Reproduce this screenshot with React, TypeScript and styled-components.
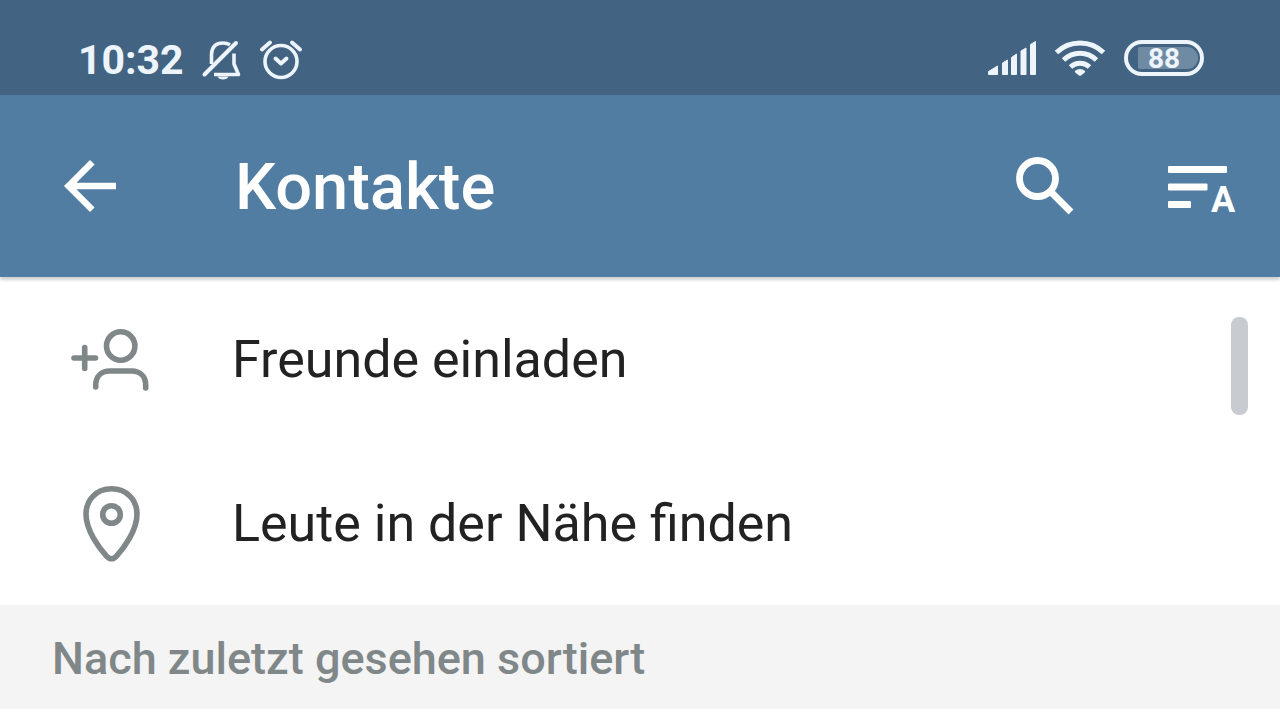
import React from 'react';
import styled, { createGlobalStyle } from 'styled-components';

const GlobalStyle = createGlobalStyle`
  * { box-sizing: border-box; }
  body {
    margin: 0;
    background: #ffffff;
    font-family: Roboto, "Liberation Sans", sans-serif;
  }
  svg { display: block; flex: none; overflow: visible; }
`;

const StatusBar = styled.div`
  display: flex;
  align-items: flex-start;
  justify-content: space-between;
  padding: 0 76px 0 78px;
  height: 95px;
  background: #426482;
  color: #edf4fb;
`;

const StatusGroup = styled.div<{ $gap: number }>`
  display: flex;
  align-items: center;
  gap: ${(p) => p.$gap}px;
  height: 48px;
  margin-top: 36px;
`;

const SystemGroup = styled(StatusGroup)`
  margin-top: 34px;
`;

const Clock = styled.time`
  font-size: 41px;
  line-height: 48px;
  font-weight: 700;
`;

const Battery = styled.div`
  display: flex;
  align-items: center;
  justify-content: flex-end;
  width: 80px;
  height: 36px;
  padding-right: 2px;
  border: 4px solid #edf4fb;
  border-radius: 18px;
`;

const BatteryLevel = styled.span`
  width: 60px;
  height: 22px;
  padding-left: 10px;
  border-radius: 2px 11px 11px 2px;
  background: #6f8ba4;
  font-size: 28px;
  line-height: 24px;
  font-weight: 700;
`;

const AppBar = styled.header`
  position: relative;
  z-index: 1;
  display: flex;
  align-items: center;
  height: 182px;
  padding: 0 44px 0 51px;
  background: #517da2;
  color: #ffffff;
  box-shadow: 0 3px 3px rgba(0, 0, 0, 0.18);
`;

const IconButton = styled.button`
  display: block;
  padding: 0;
  border: 0;
  background: none;
  color: inherit;
  cursor: pointer;
`;

const Title = styled.h1`
  flex: 1;
  margin: 0 0 0 106px;
  padding-top: 2px;
  font-size: 65px;
  line-height: 78px;
  font-weight: 500;
`;

const Actions = styled.div`
  display: flex;
  align-items: center;
  gap: 94px;
`;

const Content = styled.main`
  position: relative;
`;

const ActionList = styled.ul`
  margin: 0;
  padding: 0;
  list-style: none;
`;

const ActionRow = styled.button`
  display: flex;
  align-items: center;
  gap: 81px;
  width: 100%;
  height: 164px;
  padding: 2px 71px 0;
  border: 0;
  background: #ffffff;
  color: #222222;
  font-family: inherit;
  font-size: 52px;
  line-height: 60px;
  text-align: left;
  cursor: pointer;

  svg { color: #808789; }
`;

const ScrollThumb = styled.div`
  position: absolute;
  top: 40px;
  right: 32px;
  width: 17px;
  height: 98px;
  border-radius: 8px;
  background: #c8cbd0;
`;

const SectionHeader = styled.h2`
  margin: 0;
  padding: 27px 52px 23px;
  background: #f4f4f4;
  color: #808789;
  font-size: 45px;
  line-height: 54px;
  font-weight: 500;
`;

const MutedIcon = () => (
  <svg width="38" height="40" viewBox="0 0 38 40" fill="none" stroke="currentColor" strokeWidth="3.600" aria-hidden="true">
    <path d="M1.500 34.500 33 3" strokeWidth="4" strokeLinecap="round" />
    <path d="M8.500 24V14C9 6 14 3 20 3c3 0 5 .6 7 1.800" />
    <path d="M31 13.500V24l4.500 10.500H11" strokeLinejoin="round" />
    <path d="M14.500 36.500h11c-1 2.200-3 3-5.500 3s-4.500-.8-5.500-3Z" fill="currentColor" stroke="none" />
  </svg>
);

const AlarmIcon = () => (
  <svg width="42" height="40" viewBox="0 0 42 40" fill="none" stroke="currentColor" strokeWidth="4" strokeLinecap="round" aria-hidden="true">
    <circle cx="21" cy="21.500" r="16" strokeWidth="3.600" />
    <path d="M2 9.500 10 2.500M32 2.500l8 7" />
    <path d="m15.500 18.500 5.500 5 5.500-5" strokeLinejoin="round" />
  </svg>
);

const SignalIcon = () => (
  <svg width="48" height="34" viewBox="0 0 48 34" fill="currentColor" stroke="currentColor" strokeLinejoin="round" aria-hidden="true">
    <path d="M.5 30.500 9.500 25v8.500h-9ZM14.500 22l5-3v14.500h-5ZM23.500 16.500l5-3.500v20.500h-5ZM33 10l5-3v26.500h-5ZM42.500 3.500l5-3v33h-5Z" />
  </svg>
);

const WifiIcon = () => (
  <svg width="50" height="36" viewBox="0 0 50 36" fill="none" stroke="currentColor" strokeWidth="5" aria-hidden="true">
    <path d="M1.500 12.500C14.500-.2 35.500-.2 48.500 12.500" />
    <path d="M8.500 20c9.500-9 23.500-9 33 0" />
    <path d="M15.500 27c5.500-5 13.500-5 19 0" />
    <path d="M20 31c3-2.800 7-2.800 10 0 .4.600.2 1-.2 1.400L26 35.600c-.6.500-1.400.5-2 0l-3.800-3.200c-.4-.4-.6-.8-.2-1.400Z" fill="currentColor" stroke="none" />
  </svg>
);

const BackIcon = () => (
  <svg width="78" height="78" viewBox="0 0 24 24" fill="currentColor" aria-hidden="true">
    <path d="M20 11H7.830l5.590-5.590L12 4l-8 8 8 8 1.410-1.410L7.830 13H20v-2z" />
  </svg>
);

const SearchIcon = () => (
  <svg width="58" height="58" viewBox="0 0 58 58" fill="none" stroke="currentColor" strokeWidth="6.800" aria-hidden="true">
    <circle cx="21.500" cy="21.500" r="18" />
    <path d="m35 35 20 20" />
  </svg>
);

const SortIcon = () => (
  <svg width="68" height="58" viewBox="0 0 68 58" fill="currentColor" aria-hidden="true">
    <rect y="9" width="59" height="7" rx="1" />
    <rect y="26.500" width="39.500" height="7" rx="1" />
    <rect y="44" width="23" height="7" rx="1" />
    <text x="55" y="54.500" textAnchor="middle" fontFamily="Roboto, sans-serif" fontSize="36" fontWeight="700">A</text>
  </svg>
);

const InviteIcon = () => (
  <svg width="80" height="62" viewBox="0 0 80 62" fill="none" stroke="currentColor" strokeWidth="5.600" strokeLinecap="round" aria-hidden="true">
    <circle cx="49.700" cy="17" r="14.200" />
    <path d="M3 29h21.500M13.700 18.500v21" />
    <path d="M24.700 58v-1.500c0-9 5.500-14.500 14-14.500h22c8.500 0 14 5.500 14 14.500V59" />
  </svg>
);

const NearbyIcon = () => (
  <svg width="80" height="76" viewBox="0 0 80 76" fill="none" stroke="currentColor" strokeWidth="5.600" aria-hidden="true">
    <path d="M40.500 2.800c-15 0-25.500 11-25.500 25.500 0 16 13 33.500 20.500 41.800 3.300 3.600 6.700 3.600 10 0C53 61.800 66 44.300 66 28.300 66 13.800 55.500 2.800 40.500 2.800Z" />
    <circle cx="40.500" cy="28.500" r="8.800" />
  </svg>
);

export default function App() {
  return (
    <>
      <GlobalStyle />
      <StatusBar>
        <StatusGroup $gap={19}>
          <Clock>10:32</Clock>
          <MutedIcon />
          <AlarmIcon />
        </StatusGroup>
        <SystemGroup $gap={19}>
          <SignalIcon />
          <WifiIcon />
          <Battery>
            <BatteryLevel>88</BatteryLevel>
          </Battery>
        </SystemGroup>
      </StatusBar>
      <AppBar>
        <IconButton type="button" aria-label="Zurück">
          <BackIcon />
        </IconButton>
        <Title>Kontakte</Title>
        <Actions>
          <IconButton type="button" aria-label="Suchen">
            <SearchIcon />
          </IconButton>
          <IconButton type="button" aria-label="Sortieren">
            <SortIcon />
          </IconButton>
        </Actions>
      </AppBar>
      <Content>
        <ActionList>
          <li>
            <ActionRow type="button">
              <InviteIcon />
              Freunde einladen
            </ActionRow>
          </li>
          <li>
            <ActionRow type="button">
              <NearbyIcon />
              Leute in der Nähe finden
            </ActionRow>
          </li>
        </ActionList>
        <SectionHeader>Nach zuletzt gesehen sortiert</SectionHeader>
        <ScrollThumb />
      </Content>
    </>
  );
}
